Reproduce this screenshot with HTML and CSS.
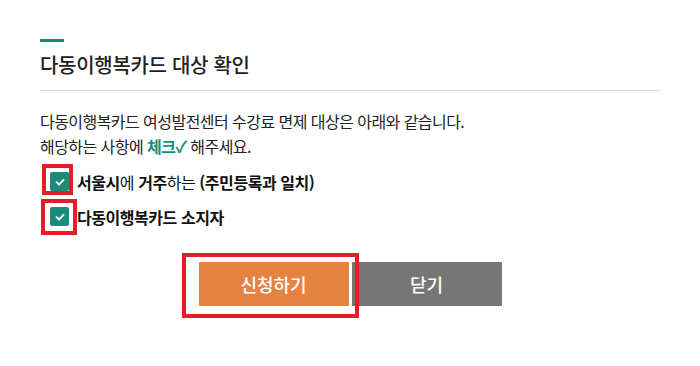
FILE: index.html
```html
<!DOCTYPE html>
<html lang="ko">
<head>
<meta charset="utf-8">
<link rel="stylesheet" href="styles.css">
</head>
<body>
<div class="page">
  <div class="accent"></div>
  <h2 class="title">다동이행복카드 대상 확인</h2>
  <div class="divider"></div>
  <p class="desc">다동이행복카드 여성발전센터 수강료 면제 대상은 아래와 같습니다.<br>해당하는 사항에 <span class="hl">체크✓</span> 해주세요.</p>
  <ul class="checks">
    <li class="check-row">
      <span class="cb"><svg viewBox="0 0 18 18" width="18" height="18"><path d="M5.5 9.2 L8 11.5 L12.5 7" fill="none" stroke="#fff" stroke-width="1.8" stroke-linecap="round" stroke-linejoin="round"/></svg></span>
      <span class="label"><b>서울시</b>에 <b>거주</b>하는 <b>(주민등록과 일치)</b></span>
    </li>
    <li class="check-row">
      <span class="cb"><svg viewBox="0 0 18 18" width="18" height="18"><path d="M5.5 9.2 L8 11.5 L12.5 7" fill="none" stroke="#fff" stroke-width="1.8" stroke-linecap="round" stroke-linejoin="round"/></svg></span>
      <span class="label"><b>다동이행복카드 소지자</b></span>
    </li>
  </ul>
  <div class="buttons">
    <button class="btn btn-apply">신청하기</button>
    <button class="btn btn-close">닫기</button>
  </div>
  <div class="mark mark-1"></div>
  <div class="mark mark-2"></div>
  <div class="mark mark-3"></div>
</div>
</body>
</html>
```
FILE: styles.css
```css
* { box-sizing: border-box; }
html, body { margin: 0; padding: 0; background: #fff; }
body {
  font-family: "Noto Sans CJK KR", "Noto Sans", sans-serif;
  color: #222;
}
.page {
  position: relative;
  width: 700px;
  height: 366px;
  padding: 39px 40px 0 40px;
}
.accent {
  width: 24px;
  height: 3px;
  background: #0e8c7c;
}
.title {
  margin: 9px 0 0 0;
  font-size: 20px;
  font-weight: 500;
  line-height: 28px;
  color: #222;
  letter-spacing: -0.3px;
}
.divider {
  width: 620px;
  height: 1px;
  background: #dcdcdc;
  margin-top: 11px;
}
.desc {
  margin: 18px 0 0 0;
  font-size: 16px;
  line-height: 25px;
  letter-spacing: -0.55px;
  color: #222;
}
.hl { color: #12907e; font-weight: 700; }
.checks {
  list-style: none;
  margin: 5px 0 0 0;
  padding: 0 0 0 10px;
}
.check-row {
  display: flex;
  align-items: center;
  height: 35px;
}
.cb {
  flex: none;
  width: 19px;
  height: 19px;
  background: #1a8c7c;
  border-radius: 2px;
  display: flex;
  align-items: center;
  justify-content: center;
  margin-right: 8px;
}
.cb svg { display: block; width: 18px; height: 18px; }
.label {
  font-size: 16px;
  letter-spacing: -0.45px;
  color: #111;
}
.label b { font-weight: 700; }
.buttons {
  display: flex;
  justify-content: center;
  gap: 3px;
  margin: 28px 0 0 -40px;
  width: 700px;
}
.btn {
  width: 150px;
  height: 44px;
  border: 0;
  color: #fff;
  font-family: "Noto Sans CJK KR", sans-serif;
  font-size: 18px;
  font-weight: 500;
  cursor: pointer;
}
.btn-apply { background: #e78342; }
.btn-close { background: #767676; }
.mark {
  position: absolute;
  border: 4px solid #e21f26;
}
.mark-1 { left: 42px; top: 164px; width: 31px; height: 31px; }
.mark-2 { left: 41px; top: 199px; width: 36px; height: 36px; }
.mark-3 { left: 182px; top: 253px; width: 177px; height: 65px; }
```
